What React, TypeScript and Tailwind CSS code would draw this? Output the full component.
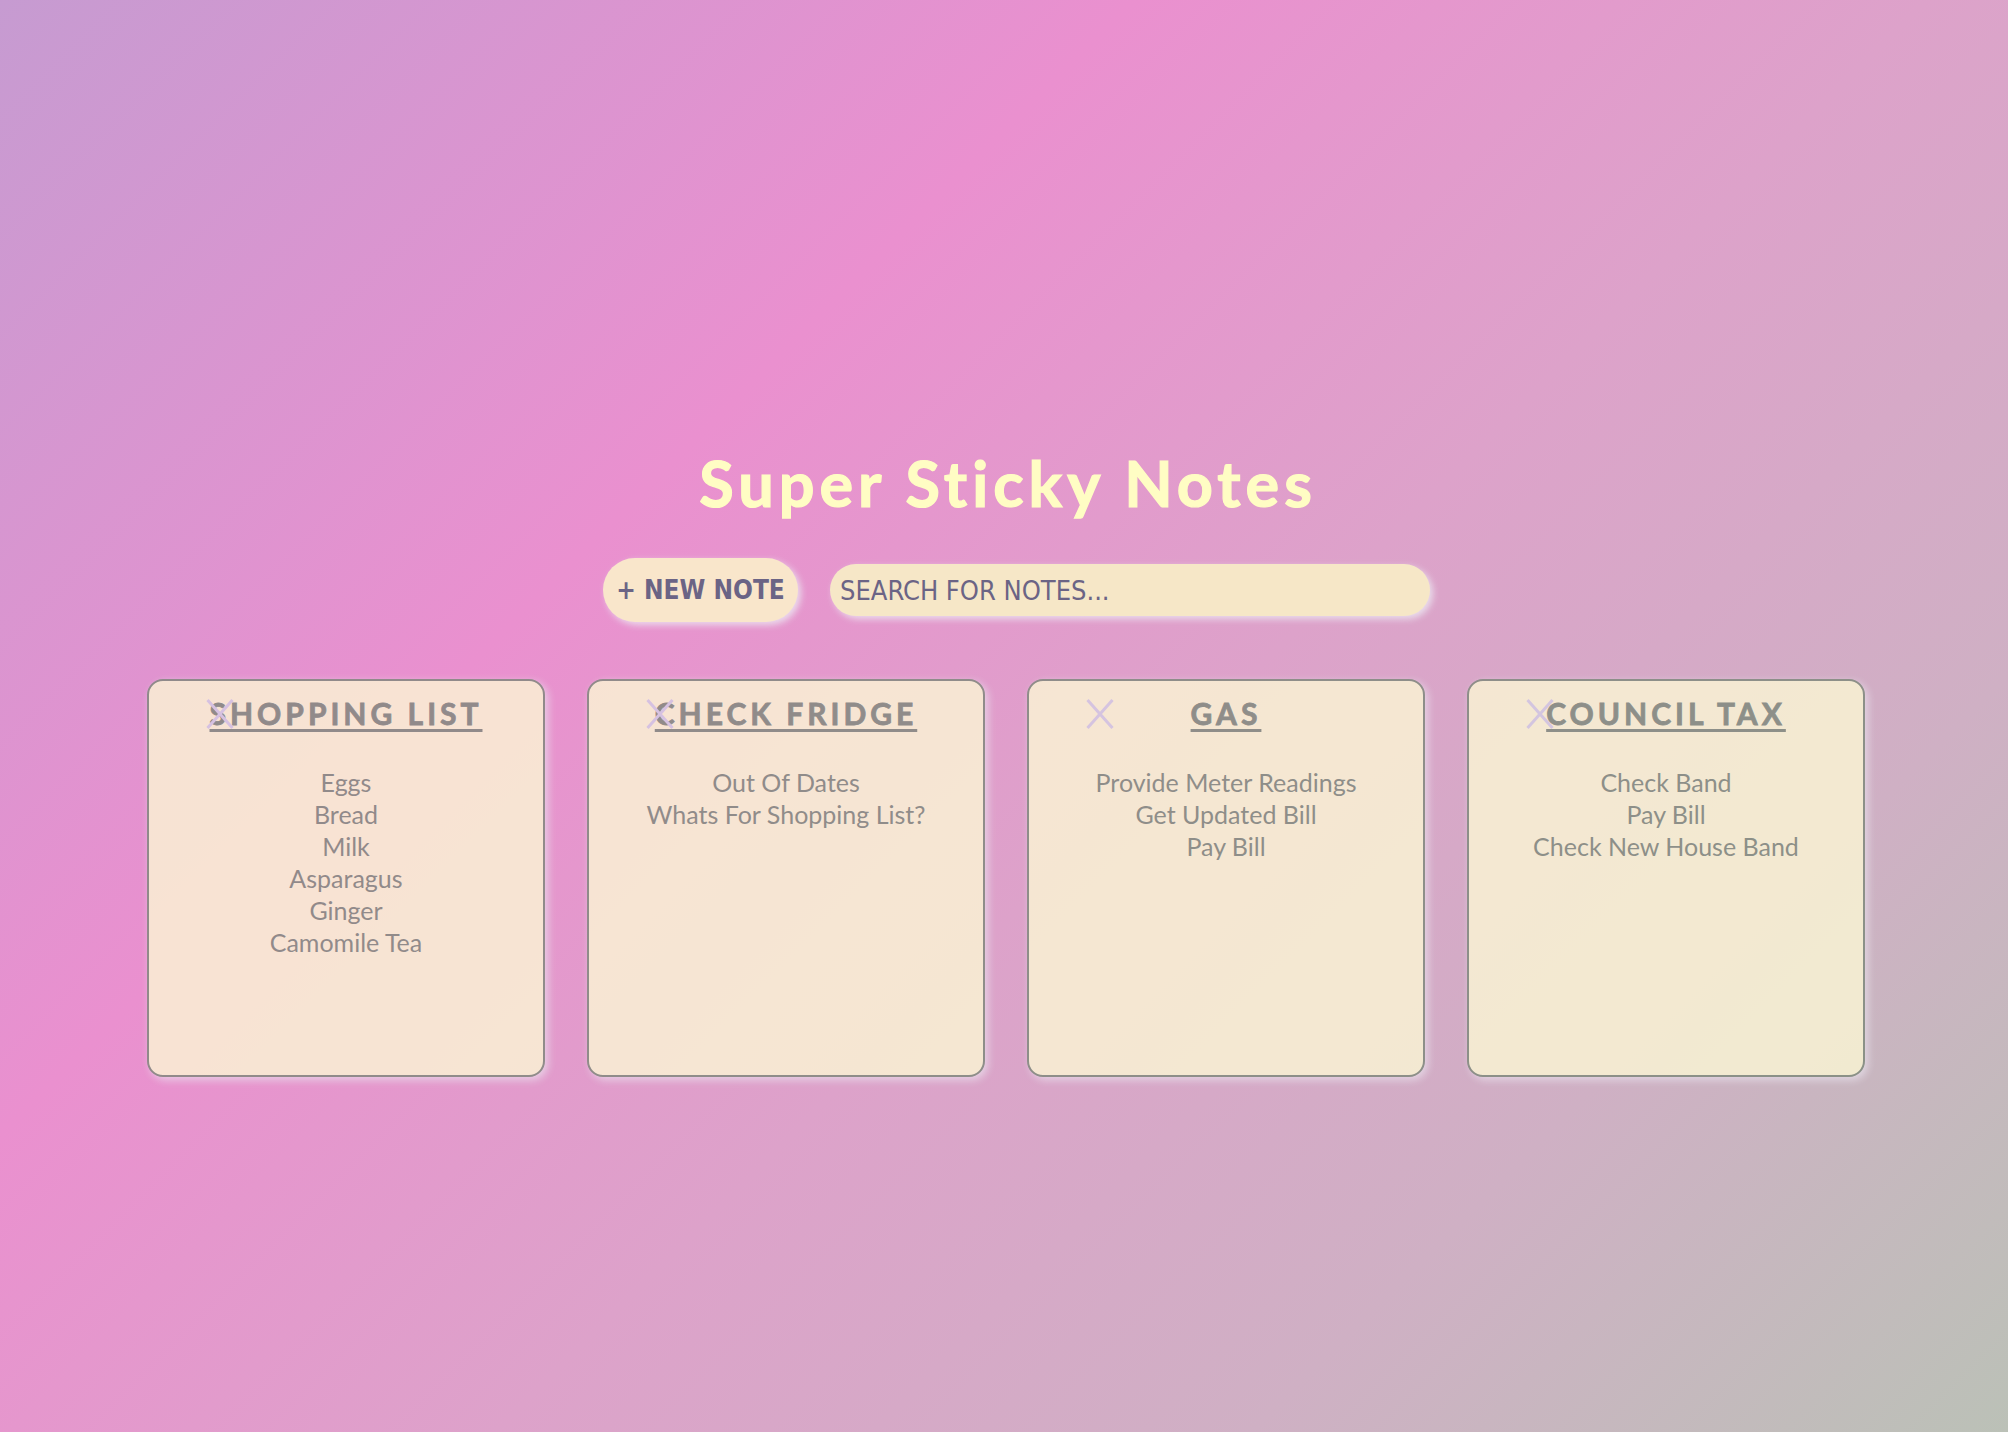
import React from "react";

type Note = { title: string; items: string[] };

const notes: Note[] = [
  { title: "Shopping List", items: ["Eggs", "Bread", "Milk", "Asparagus", "Ginger", "Camomile Tea"] },
  { title: "Check Fridge", items: ["Out Of Dates", "Whats For Shopping List?"] },
  { title: "Gas", items: ["Provide Meter Readings", "Get Updated Bill", "Pay Bill"] },
  { title: "Council Tax", items: ["Check Band", "Pay Bill", "Check New House Band"] },
];

function CloseX() {
  return (
    <svg width="28" height="30" viewBox="0 0 28 30" className="absolute left-[57px] top-[18px]">
      <line x1="1.5" y1="1" x2="26.5" y2="29" stroke="#d3cde6" strokeWidth="3" />
      <line x1="26.5" y1="1" x2="1.5" y2="29" stroke="#d3cde6" strokeWidth="3" />
    </svg>
  );
}

function Card({ note }: { note: Note }) {
  return (
    <div className="relative w-[398px] h-[398px] rounded-[16px] border-2 border-[#7c897a] bg-[#fcf8d5] opacity-80 shadow-[3px_3px_8px_rgba(235,230,240,0.9)] pt-[14px] text-center text-[#7c897a]">
      <h2 className="font-[family-name:Lato,sans-serif] font-bold uppercase text-[30px] leading-[36px] tracking-[4px] underline decoration-[3px] underline-offset-[4px] [-webkit-text-stroke:0.8px_currentColor]">
        {note.title}
      </h2>
      <CloseX />
      <ul className="mt-[35px] font-[family-name:Lato,sans-serif] text-[25px] leading-[32px]">
        {note.items.map((it) => (
          <li key={it}>{it}</li>
        ))}
      </ul>
    </div>
  );
}

export default function App() {
  return (
    <div className="w-full h-[1432px] overflow-hidden flex flex-col items-center bg-[linear-gradient(135deg,#c69bd1_0%,#ea90cf_33%,#dda2ca_56%,#cfb0c4_78%,#bbc1b7_100%)]">
      <h1 className="pt-[451px] pl-[8px] font-[family-name:Lato,sans-serif] font-bold text-[63px] leading-[63px] tracking-[5px] text-[#fffdc4] [-webkit-text-stroke:1.2px_#fffdc4]">
        Super Sticky Notes
      </h1>
      <div className="mt-[44px] ml-[25px] flex items-center gap-[32px]">
        <button className="h-[64px] w-[195px] rounded-full bg-[#f9e6cb] text-[#6b6485] font-[family-name:'DejaVu_Sans_Condensed','DejaVu_Sans',sans-serif] font-stretch-condensed font-bold text-[26px] shadow-[3px_3px_7px_rgba(235,228,240,0.9)]">
          + NEW NOTE
        </button>
        <input
          type="text"
          placeholder="SEARCH FOR NOTES..."
          className="h-[52px] w-[600px] rounded-full bg-[#f6e7c7] pl-[10px] outline-none text-[#6b6485] placeholder:text-[#6b6485] font-[family-name:'DejaVu_Sans_Condensed','DejaVu_Sans',sans-serif] font-stretch-condensed text-[27px] shadow-[3px_3px_7px_rgba(235,228,240,0.9)]"
        />
      </div>
      <div className="mt-[57px] ml-[4px] flex gap-[42px]">
        {notes.map((n) => (
          <Card key={n.title} note={n} />
        ))}
      </div>
    </div>
  );
}
